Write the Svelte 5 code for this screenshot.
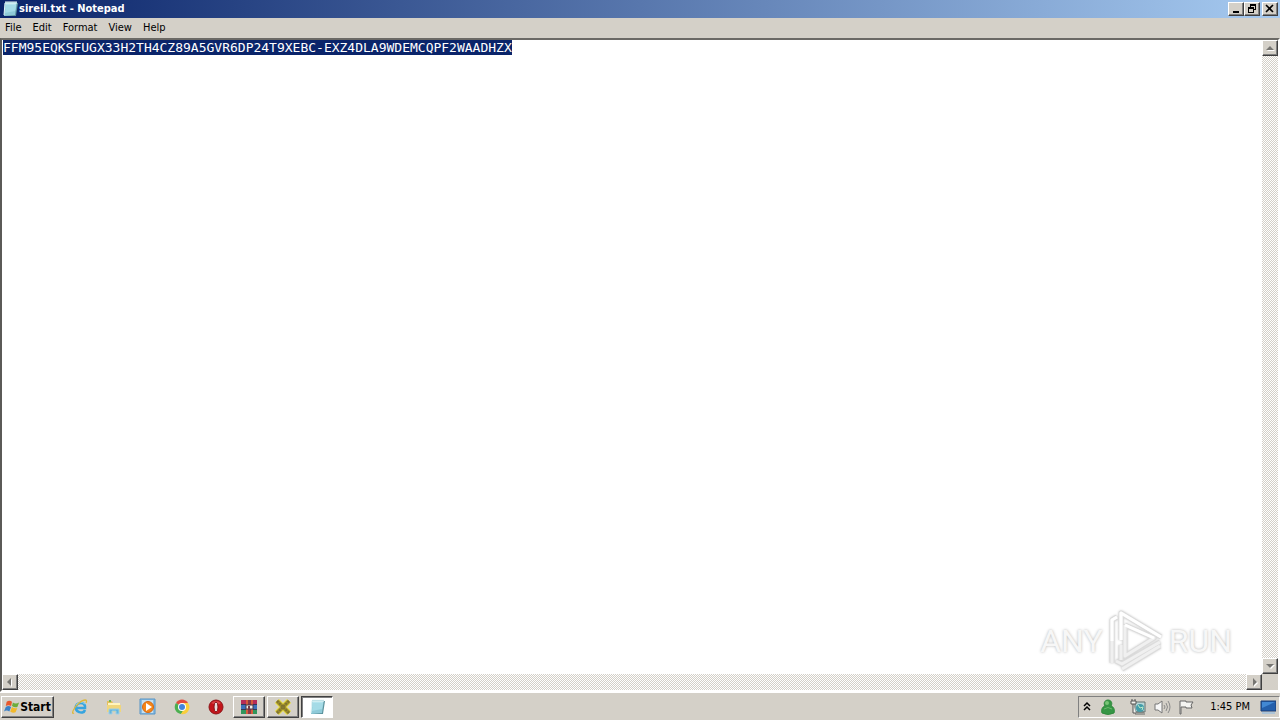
<script lang="ts">
  import { onMount } from 'svelte';

  let editor: HTMLTextAreaElement;
  let content = $state('FFM95EQKSFUGX33H2TH4CZ89A5GVR6DP24T9XEBC-EXZ4DLA9WDEMCQPF2WAADHZX');
  const menus = ['File', 'Edit', 'Format', 'View', 'Help'];

  onMount(() => {
    editor.focus();
    editor.select();
  });
</script>

{#snippet notepad()}
  <svg class="icon" viewBox="0 0 18 18" aria-hidden="true">
    <path d="M5 3h12l-2 13H3z" fill="#5b929c" />
    <path d="M4 2h12l-2 13-11 1z" fill="#8fcad8" />
    <path d="M5 3h10l-1 8-10 2z" fill="#b4e4ee" />
    <path d="M5 6h9M5 8h9M4 10h10M4 12h9" stroke="#8bcbd9" stroke-width=".7" />
    <path d="M5 1v3M7 1v3M9 1v3M11 1v3M13 1v3M15 1v3" stroke="#edf6f4" />
    <path d="m4 3-1 12" stroke="#e1f4f6" />
  </svg>
{/snippet}

{#snippet arrow(d: string)}
  <svg viewBox="0 0 12 12" aria-hidden="true">
    <path transform="translate(1 1)" {d} fill="#fff" />
    <path {d} fill="#777672" />
  </svg>
{/snippet}

<div class="desktop">
  <main class="window">
    <header class="titlebar">
      {@render notepad()}
      <h1>sireil.txt - Notepad</h1>
      <div class="caption">
        <button aria-label="Minimize"><svg viewBox="0 0 12 10"><path d="M3 7h6v2H3z" /></svg></button>
        <button aria-label="Restore"><svg viewBox="0 0 12 10"><path d="M4 0h6v6H8V5h1V2H5v1H4zM2 3h6v6H2zM3 5v3h4V5z" fill-rule="evenodd" /></svg></button>
        <button class="close" aria-label="Close"><svg viewBox="0 0 12 10"><path d="m2 1 7 7m0-7-7 7" stroke="#000" stroke-width="1.6" /></svg></button>
      </div>
    </header>
    <nav class="menubar" aria-label="Menu">
      {#each menus as menu}<button>{menu}</button>{/each}
    </nav>
    <section class="document">
      <textarea bind:this={editor} bind:value={content} aria-label="Document text" wrap="off" spellcheck="false"></textarea>
      <div class="track vertical">
        <button aria-label="Scroll up">{@render arrow('M2 8 6 4l4 4z')}</button>
        <button aria-label="Scroll down">{@render arrow('M2 4h8L6 8z')}</button>
      </div>
      <div class="track horizontal">
        <button aria-label="Scroll left">{@render arrow('M7 2v8L3 6z')}</button>
        <button aria-label="Scroll right">{@render arrow('M5 2v8l4-4z')}</button>
      </div>
      <div class="corner"></div>
      <div class="watermark" aria-label="ANY RUN">
        <span>ANY</span>
        <svg viewBox="0 0 58 64" aria-hidden="true">
          <g fill="none" stroke-linejoin="round">
            <path d="M5 54V11l5-3M14 31V4l40 24M18 16v31l29-18-29-13M14 36v15M9 52l6 3 38-22M15 60l38-23" stroke="#dcdcdc" stroke-width="5" />
            <path d="M5 54V11l5-3M14 31V4l40 24M18 16v31l29-18-29-13M14 36v15M9 52l6 3 38-22M15 60l38-23" stroke="#f0f0f0" stroke-width="3" />
            <path d="M5 32V11l5-3M14 31V4l40 24M18 16l29 13" stroke="#fff" stroke-width="3" />
          </g>
        </svg>
        <span>RUN</span>
      </div>
    </section>
  </main>

  <footer class="taskbar">
    <button class="start">
      <svg viewBox="0 0 18 18" aria-hidden="true">
        <path d="M3 3q3-2 6 0L8 8Q5 6 2 8z" fill="#e8582c" />
        <path d="M10 4q3 2 7 0l-2 5q-3 1-6-1z" fill="#6dad3c" />
        <path d="M2 9q3-2 6 0l-2 5q-3-2-6 0z" fill="#3b80c6" />
        <path d="M9 9q3 2 6 1l-2 5q-3 1-6-1z" fill="#f2b92b" />
      </svg>
      <span>Start</span>
    </button>
    <div class="apps">
      <button aria-label="Internet Explorer">
        <svg class="icon" viewBox="0 0 18 18">
          <path d="M14 12c-1 3-4 3-6 2-3-1-4-4-3-6 2-4 8-4 9 0v2H6" fill="none" stroke="#36a4df" stroke-width="2.5" />
          <path d="M5 7q4-5 9-1" fill="none" stroke="#83d5f5" />
          <path d="M3 15C0 17 2 10 8 5c5-4 9-4 7 0" fill="none" stroke="#ddb83b" stroke-width="1.3" />
        </svg>
      </button>
      <button aria-label="File Explorer">
        <svg class="icon" viewBox="0 0 18 18">
          <path d="M2 3h5l1 2h7v9H2z" fill="#e2bf5f" />
          <path d="M3 5h12v3H3z" fill="#fff4bd" />
          <path d="M2 7h14v7H2z" fill="#f0d67c" />
          <path d="M4 16v-5h10v5h-3v-3H7v3z" fill="#65b6de" stroke="#9fcfe4" />
          <path d="M4 3h2" stroke="#71b74e" stroke-width="2" />
        </svg>
      </button>
      <button aria-label="Media Player">
        <svg class="icon" viewBox="0 0 18 18">
          <path d="M1 1h15v15H1z" fill="#8abce0" stroke="#5795c7" />
          <path d="M3 2h11v13H3z" fill="#c3dff0" />
          <circle cx="9" cy="9" r="5.5" fill="#f58618" stroke="#d76813" />
          <path d="m7 5 6 4-6 4z" fill="#fff" />
        </svg>
      </button>
      <button aria-label="Chrome">
        <svg class="icon" viewBox="0 0 18 18">
          <path d="M9 9 3 5a7 7 0 0 1 12 0z" fill="#e34b3d" />
          <path d="M9 9 3 5a7 7 0 0 0 5 11l4-5z" fill="#4caf50" />
          <path d="M9 5h6a7 7 0 0 1-7 11l4-7z" fill="#f9ce3c" />
          <circle cx="9" cy="9" r="4" fill="#fff" /><circle cx="9" cy="9" r="3" fill="#4284dd" />
        </svg>
      </button>
      <button aria-label="Opera">
        <svg class="icon" viewBox="0 0 18 18">
          <circle cx="9" cy="9" r="7" fill="#c3141a" stroke="#8d1518" />
          <path d="M4 5q5-4 10 0-3 3-10 0" fill="#e55355" opacity=".7" />
          <ellipse cx="9" cy="9" rx="2" ry="5" fill="#e8ddda" stroke="#851014" />
        </svg>
      </button>
      <button class="running" aria-label="WinRAR">
        <svg class="icon" viewBox="0 0 18 18">
          <path d="M1 2h16v14H1z" fill="#353857" />
          <path d="M1 2h5v4H1zM13 2h4v4h-4z" fill="#b52c58" />
          <path d="M1 7h5v4H1zM13 7h4v4h-4z" fill="#3d70bb" />
          <path d="M1 12h5v4H1zM13 12h4v4h-4z" fill="#30955b" />
          <path d="M6 2h7v14H6z" fill="#d65b3c" />
          <path d="M8 2h3v14H8z" fill="#863b49" />
          <path d="M6 7h7v4H6z" fill="#f4eee7" stroke="#44384a" /><path d="M9 8v3" stroke="#773945" stroke-width="2" />
        </svg>
      </button>
      <button class="running" aria-label="Utility">
        <svg class="icon" viewBox="0 0 18 18">
          <path d="m3 3 12 12M15 3 3 15" stroke="#ebe14c" stroke-width="6" />
          <path d="m3 3 12 12M15 3 3 15" stroke="#a3922c" stroke-width="4" />
          <path d="m3 3 12 12M15 3 3 15" stroke="#7c7130" stroke-width="2" stroke-dasharray="2 1" />
        </svg>
      </button>
      <button class="running active" aria-label="Notepad">{@render notepad()}</button>
    </div>
    <div class="tray">
      <button aria-label="Show hidden icons">
        <svg viewBox="0 0 10 14"><path d="m2 6 3-3 3 3M2 10l3-3 3 3" fill="none" stroke="#000" stroke-width="1.5" /></svg>
      </button>
      <button aria-label="User status">
        <svg viewBox="0 0 18 18">
          <path d="M9 2C6 2 4 5 6 8c-3 1-4 4-3 7q6 3 12 0c1-3 0-6-3-7 2-3 0-6-3-6z" fill="#369645" stroke="#318a3d" />
          <circle cx="8" cy="5" r="2" fill="#78c576" /><path d="M5 11q4-3 8 0" stroke="#6bb86d" fill="none" />
        </svg>
      </button>
      <button class="network" aria-label="Network">
        <svg viewBox="0 0 18 18">
          <path d="M6 4h10v10H6z" fill="#b9d8d9" stroke="#62716e" />
          <path d="M7 14h8M6 16h10" stroke="#666b68" /><circle cx="11" cy="10" r="4" fill="#439da9" />
          <path d="m9 7 2 3 3-1-1 3" fill="none" stroke="#bdeac8" />
          <path d="M2 3h5v3H2zM3 1v2M6 1v2M4 6v9h3" fill="#f3f3ee" stroke="#555" />
        </svg>
      </button>
      <button aria-label="Volume">
        <svg viewBox="0 0 18 18">
          <path d="M2 6h3l4-3v12l-4-3H2z" fill="#f7f7f7" stroke="#777" />
          <path d="M11 7q2 2 0 4M13 5q3 4 0 8M15 3q4 6 0 12" fill="none" stroke="#8b8b8b" />
        </svg>
      </button>
      <button aria-label="Action Center">
        <svg viewBox="0 0 18 18"><path d="M3 16V3h6v1h7l-2 3 1 3H9V9H4v7z" fill="#f5f5f2" stroke="#666" /></svg>
      </button>
      <time>1:45 PM</time>
      <button class="show-desktop" aria-label="Show desktop">
        <svg viewBox="0 0 16 16">
          <path d="M1 2h15v10H1z" fill="#245fab" stroke="#193d74" />
          <path d="M2 3h13L2 9z" fill="#4288d3" /><path d="M2 14h13" stroke="#acc4d8" stroke-width="2" />
        </svg>
      </button>
    </div>
  </footer>
</div>

<style>
  :global(body) { margin: 0; }
  * { box-sizing: border-box; }
  .desktop {
    --face: #d4d0c8;
    display: flex;
    flex-direction: column;
    height: 100vh;
    overflow: hidden;
    background: var(--face);
    color: #000;
    font: 11px/16px Tahoma, "DejaVu Sans Condensed", sans-serif;
  }
  button {
    display: flex;
    align-items: center;
    justify-content: center;
    margin: 0;
    padding: 0;
    border: 0;
    background: transparent;
    color: inherit;
    font: inherit;
  }
  svg { display: block; flex: none; }
  .icon { width: 18px; height: 18px; }
  .window { display: flex; flex: 1; flex-direction: column; min-height: 0; }
  .titlebar {
    display: flex;
    flex: none;
    align-items: center;
    height: 18px;
    padding: 0 2px 0 1px;
    background: linear-gradient(90deg, #0a246a, #a6caf0);
    color: #fff;
  }
  h1 { flex: 1; margin: 0; font-size: 11px; font-weight: 700; }
  .caption { display: flex; }
  .caption button, .track button {
    width: 16px;
    border: 1px solid;
    border-color: #fff #404040 #404040 #fff;
    background: var(--face);
    box-shadow: inset -1px -1px #808080;
  }
  .caption button { height: 14px; }
  .caption svg { width: 12px; height: 10px; }
  .caption .close { margin-left: 2px; }
  .menubar { display: flex; flex: none; height: 20px; }
  .menubar button { padding: 0 6px 0 5px; }
  .document {
    position: relative;
    display: grid;
    flex: 1;
    grid-template: minmax(0, 1fr) 16px / minmax(0, 1fr) 16px;
    min-height: 0;
    border: 2px solid;
    border-color: #6b6965 #fff #fff #5b5a57;
  }
  textarea {
    width: 100%;
    height: 100%;
    margin: 0;
    padding: 1px;
    overflow: hidden;
    resize: none;
    border: 0;
    outline: 0;
    background: #fff;
    color: #000;
    caret-color: transparent;
    font: 13px/13px "DejaVu Sans Mono", monospace;
  }
  textarea::selection { background: #0a246a; color: #fff; }
  .track {
    display: flex;
    justify-content: space-between;
    background: repeating-conic-gradient(#d4d0c8 0 25%, #fff 0 50%) 0 0 / 2px 2px;
  }
  .track button { height: 16px; }
  .track svg { width: 12px; height: 12px; }
  .vertical { flex-direction: column; }
  .corner { background: var(--face); }
  .watermark {
    position: absolute;
    right: 46px;
    bottom: 17px;
    display: flex;
    align-items: center;
    gap: 4px;
    color: #f7f7f7;
    font: 32px/40px Roboto, sans-serif;
    text-shadow: 0 0 3px #b5b5b5;
    pointer-events: none;
  }
  .watermark svg { width: 58px; height: 64px; filter: drop-shadow(0 0 1px #ccc); }
  .taskbar {
    display: flex;
    flex: none;
    align-items: center;
    height: 28px;
    padding-left: 1px;
    border-top: 1px solid #fff;
  }
  .start, .running {
    height: 22px;
    border: 1px solid;
    border-color: #fff #404040 #404040 #fff;
    box-shadow: inset -1px -1px #808080;
  }
  .start { width: 53px; font-size: 12px; font-weight: 700; }
  .start svg { width: 16px; height: 18px; }
  .apps { display: flex; flex: 1; align-items: center; padding-left: 9px; }
  .apps button { width: 34px; }
  .apps .running { width: 32px; margin-right: 2px; }
  .apps .active {
    border-color: #404040 #fff #fff #404040;
    background: #fff;
    box-shadow: inset 1px 1px #808080;
  }
  .tray {
    display: flex;
    align-items: center;
    height: 22px;
    padding: 0 3px;
    border: 1px solid;
    border-color: #808080 #fff #fff #808080;
  }
  .tray button { width: 24px; }
  .tray button:first-child { width: 10px; margin-right: 4px; }
  .tray .network { margin-left: 6px; }
  .tray svg { width: 18px; height: 18px; }
  .tray button:first-child svg { width: 10px; height: 14px; }
  time { margin-left: 12px; white-space: nowrap; }
  .tray .show-desktop { width: 16px; margin-left: 10px; }
  .show-desktop svg { width: 16px; height: 16px; }
</style>
